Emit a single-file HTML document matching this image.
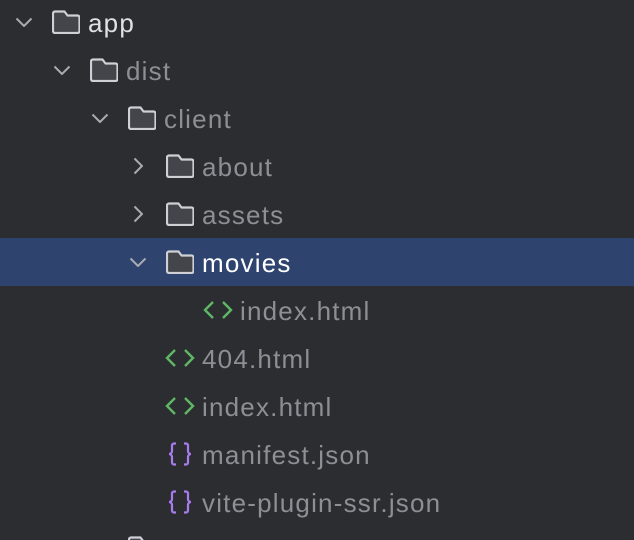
<!DOCTYPE html>
<html><head><style>
html,body{margin:0;width:634px;height:540px;background:#2b2d30;overflow:hidden;position:relative;font-family:"Liberation Sans",sans-serif;}
.r{position:absolute;left:0;width:634px;height:48px;}
.sel{background:#2e436e;}
.t{position:absolute;top:0;line-height:46px;font-size:26px;letter-spacing:1.2px;color:#8c8f95;white-space:nowrap;}
svg{position:absolute;}
</style></head><body>
<div class="r sel" style="top:238px"></div>

<svg width="0" height="0" style="position:absolute">
<defs>
<symbol id="fold" viewBox="0 0 28 24"><path d="M3 1.5h9.5l3 4h10a2 2 0 0 1 2 2v13.5a2 2 0 0 1-2 2h-22.5a2 2 0 0 1-2-2v-17.5a2 2 0 0 1 2-2z" fill="#43454a" stroke="#ced0d6" stroke-width="2.2" stroke-linejoin="round"/></symbol>
<symbol id="down" viewBox="0 0 18 10"><path d="M1.5 1.5l7.5 7.5l7.5-7.5" fill="none" stroke="#a8abb0" stroke-width="2"/></symbol>
<symbol id="right" viewBox="0 0 10 18"><path d="M1.5 1.5l7.5 7.5l-7.5 7.5" fill="none" stroke="#a8abb0" stroke-width="2"/></symbol>
<symbol id="html" viewBox="0 0 30 20"><path d="M10 2l-8 8l8 8M20 2l8 8l-8 8" fill="none" stroke="#5fb865" stroke-width="2.4"/></symbol>
<symbol id="json" viewBox="0 0 26 24"><path d="M9 1.5h-2a2 2 0 0 0-2 2v5a3 3 0 0 1-3 3.5a3 3 0 0 1 3 3.5v5a2 2 0 0 0 2 2h2M17 1.5h2a2 2 0 0 1 2 2v5a3 3 0 0 0 3 3.5a3 3 0 0 0-3 3.5v5a2 2 0 0 1-2 2h-2" fill="none" stroke="#a87cf0" stroke-width="2.2"/></symbol>
</defs></svg>

<svg style="left:15px;top:17px" width="18" height="10"><use href="#down"/></svg>
<svg style="left:52px;top:10px" width="28" height="24"><use href="#fold"/></svg>
<div class="t" style="left:88px;color:#dfe1e5">app</div>

<svg style="left:53px;top:65px" width="18" height="10"><use href="#down"/></svg>
<svg style="left:90px;top:58px" width="28" height="24"><use href="#fold"/></svg>
<div class="t" style="left:126px;top:48px">dist</div>

<svg style="left:91px;top:113px" width="18" height="10"><use href="#down"/></svg>
<svg style="left:128px;top:106px" width="28" height="24"><use href="#fold"/></svg>
<div class="t" style="left:164px;top:96px">client</div>

<svg style="left:133px;top:157px" width="10" height="18"><use href="#right"/></svg>
<svg style="left:166px;top:154px" width="28" height="24"><use href="#fold"/></svg>
<div class="t" style="left:202px;top:144px">about</div>

<svg style="left:133px;top:205px" width="10" height="18"><use href="#right"/></svg>
<svg style="left:166px;top:202px" width="28" height="24"><use href="#fold"/></svg>
<div class="t" style="left:202px;top:192px">assets</div>

<svg style="left:129px;top:257px" width="18" height="10"><use href="#down"/></svg>
<svg style="left:166px;top:250px" width="28" height="24"><use href="#fold"/></svg>
<div class="t" style="left:202px;top:240px;color:#ffffff">movies</div>

<svg style="left:203px;top:300px" width="30" height="20"><use href="#html"/></svg>
<div class="t" style="left:240px;top:288px">index.html</div>

<svg style="left:165px;top:348px" width="30" height="20"><use href="#html"/></svg>
<div class="t" style="left:202px;top:336px">404.html</div>

<svg style="left:165px;top:396px" width="30" height="20"><use href="#html"/></svg>
<div class="t" style="left:202px;top:384px">index.html</div>

<svg style="left:167px;top:442px" width="26" height="24"><use href="#json"/></svg>
<div class="t" style="left:202px;top:432px">manifest.json</div>

<svg style="left:167px;top:490px" width="26" height="24"><use href="#json"/></svg>
<div class="t" style="left:202px;top:480px">vite-plugin-ssr.json</div>

<svg style="left:128px;top:536px" width="28" height="24"><use href="#fold"/></svg>
</body></html>
